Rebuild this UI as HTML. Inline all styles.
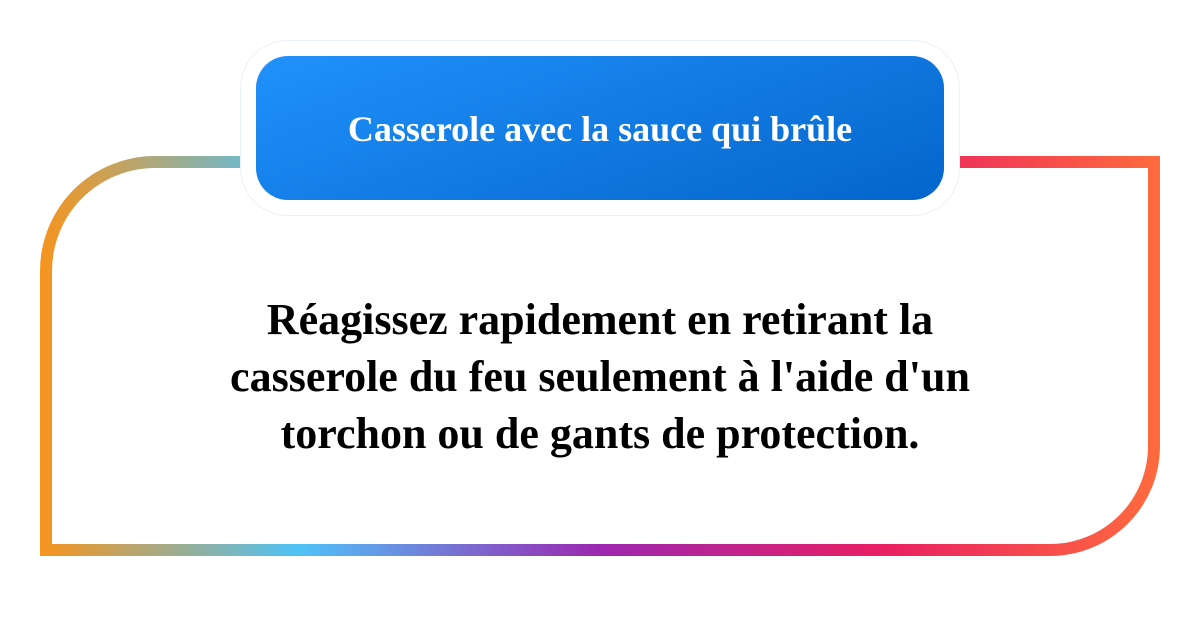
<!DOCTYPE html>
<html><head><meta charset="utf-8"><style>
body{margin:0;width:1200px;height:640px;background:#fff;position:relative;overflow:hidden;font-family:"Liberation Serif",serif}
.frame{position:absolute;left:40px;top:156px;width:1120px;height:400px;border-radius:115px 0 110px 0;background:linear-gradient(90deg,#f7941d 0%,#4fc3f7 23%,#9c27b0 50%,#e91e63 75%,#ff6b3d 100%)}
.inner{position:absolute;left:12px;top:12px;right:12px;bottom:12px;background:#fff;border-radius:103px 0 98px 0}
.hb{position:absolute;left:240px;top:40px;width:718px;height:174px;background:#fff;border-radius:48px;border:1px solid #e8f0fb}
.hd{position:absolute;left:256px;top:56px;width:688px;height:144px;border-radius:32px;background:linear-gradient(160deg,#2191fb,#0365cc);color:#fff;font-weight:bold;font-size:36px;display:flex;align-items:center;justify-content:center;padding-top:2px;box-sizing:border-box}
.txt{position:absolute;left:100px;width:1000px;top:291px;text-align:center;font-weight:bold;font-size:44px;line-height:57px;color:#000}
</style></head><body>
<div class="frame"><div class="inner"></div></div>
<div class="hb"></div>
<div class="hd">Casserole avec la sauce qui brûle</div>
<div class="txt">Réagissez rapidement en retirant la<br>casserole du feu seulement à l'aide d'un<br>torchon ou de gants de protection.</div>
</body></html>
